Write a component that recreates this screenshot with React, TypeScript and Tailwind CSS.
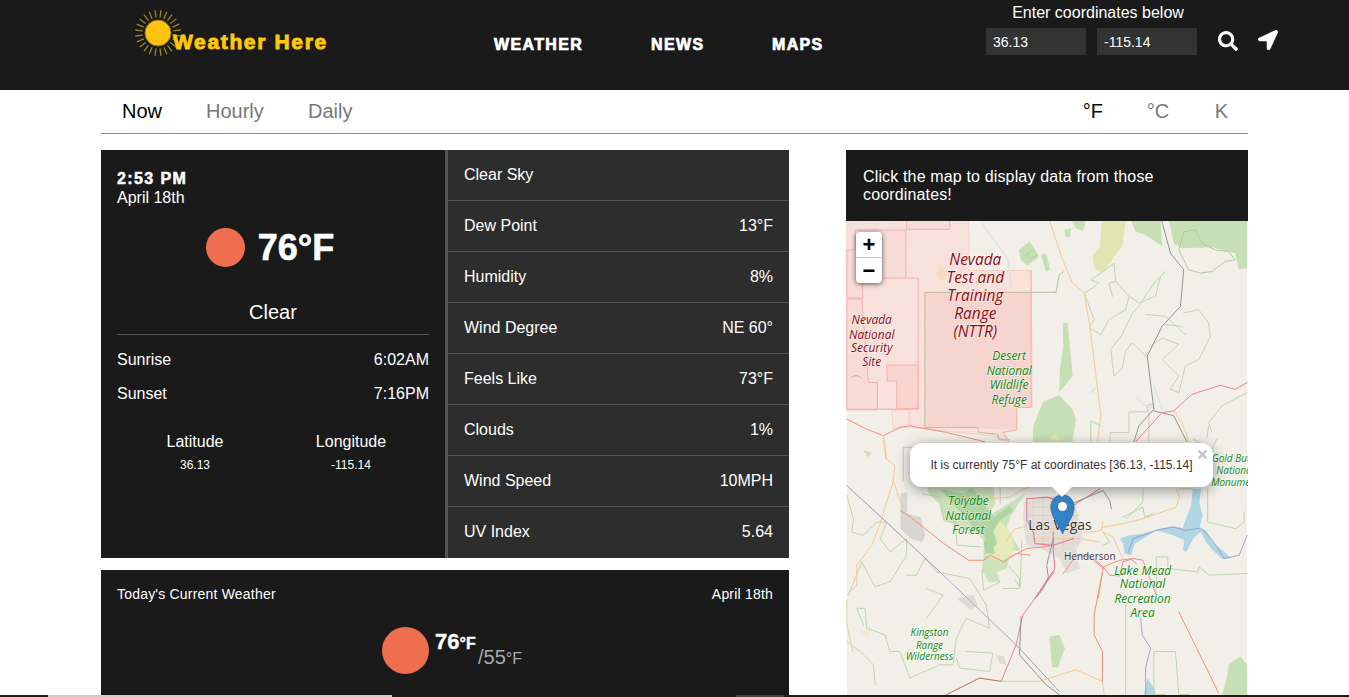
import React from "react";
import { FaSearch, FaLocationArrow, FaTimes } from "react-icons/fa";

const sans = "font-['Liberation_Sans',Arial,sans-serif]";
const heavy = "font-bold [-webkit-text-stroke:0.6px_currentColor]";

function SunLogo() {
  const rays = Array.from({ length: 24 }, (_, i) => (i * 15 + 7.5) * (Math.PI / 180));
  return (
    <svg width="48" height="48" viewBox="0 0 48 48" className="shrink-0">
      {rays.map((a, i) => (
        <line key={i} x1={24 + 15.5 * Math.cos(a)} y1={24 + 15.5 * Math.sin(a)} x2={24 + 23 * Math.cos(a)} y2={24 + 23 * Math.sin(a)} stroke="#9a8228" strokeWidth="1.3" />
      ))}
      <circle cx="24" cy="24" r="13" fill="#ffc20e" stroke="#8a7524" strokeWidth="1" />
    </svg>
  );
}

function SunIcon({ size }: { size: string }) {
  return <div className={`${size} rounded-full bg-[#ee6e4d] shrink-0`} />;
}

const rows: [string, string][] = [
  ["Clear Sky", ""],
  ["Dew Point", "13°F"],
  ["Humidity", "8%"],
  ["Wind Degree", "NE 60°"],
  ["Feels Like", "73°F"],
  ["Clouds", "1%"],
  ["Wind Speed", "10MPH"],
  ["UV Index", "5.64"],
];

const G = "#b9d7aa";
const O = "#f6c88f";
const R = "#f08f78";
const P = "#ea7f9c";
const D = "#8d9692";

function Z({ x, y, children }: { x: number; y: number; children: React.ReactNode }) {
  return <g transform={`translate(${x},${y}) scale(0.33333)`}>{children}</g>;
}
function L({ d, c, w = 3 }: { d: string; c: string; w?: number }) {
  return <path d={d} fill="none" stroke={c} strokeWidth={w} strokeLinejoin="round" strokeLinecap="round" />;
}
function Label({ x, ys, lines, size, color, italic = true }: { x: number; ys: number[]; lines: string[]; size: number; color: string; italic?: boolean }) {
  return (
    <>
      {lines.map((t, i) => (
        <text key={t} x={x} y={ys[i]} textAnchor="middle" fontSize={size} fill={color} fontStyle={italic ? "italic" : "normal"} fontFamily="'Open Sans',sans-serif" stroke="rgba(255,255,255,0.45)" strokeWidth="1.5" paintOrder="stroke">
          {t}
        </text>
      ))}
    </>
  );
}

function Range({ d, fill }: { d: string; fill: string }) {
  return (
    <>
      <path d={d} fill={fill} stroke="#f5b0ab" strokeWidth="3" />
      <path d={d} fill="url(#hatch)" />
    </>
  );
}

function MapArt() {
  return (
    <svg viewBox="0 0 402 476" className="absolute inset-0 w-full h-full block">
      <defs>
        <pattern id="hatch" width="5" height="5" patternUnits="userSpaceOnUse" patternTransform="rotate(-45)">
          <line x1="0" y1="0.5" x2="5" y2="0.5" stroke="#eeb0a8" strokeWidth="0.8" opacity="0.7" />
        </pattern>
      </defs>
      <rect width="402" height="476" fill="#f2efe9" />
      <g className="blur-[0.3px]">
        <Z x={0} y={-1}>
          {/* light restricted range */}
          <path d="M0 0H365L368 30V152H556L558 565H512V632L470 640L490 668L440 650L190 625L188 570L135 575L140 630L185 622L188 570H0Z" fill="#f9e5e0" stroke="#f7c3bb" strokeWidth="2" />
          <path d="M0 0H365L368 30V152H556L558 565H512V632L470 640L490 668L440 650L190 625L188 570H0Z" fill="url(#hatch)" />
          <Range d="M0 90H25V30H178V175H48V235H0Z" fill="#f8dfd9" />
          <Range d="M180 0H310V28H180Z" fill="#f8dfd9" />
          <Range d="M0 238H45L65 490H92V572H0Z" fill="#f8dfd9" />
          <Range d="M120 437H215V568H150V485H122Z" fill="#f7d8d2" />
          <L d="M178 175H215V570H0" c="#f5b0ab" />
          <path d="M235 218H555V565H512V632L398 628L235 625Z" fill="#f6d8d2" />
          <path d="M235 218H555V565H512V632L398 628L235 625Z" fill="url(#hatch)" />
          <path d="M235 218H630L640 165L655 155M235 218V625H395L398 640L455 645L458 662H490" fill="none" stroke="#bdbf9c" strokeWidth="3" />
          <L d="M555 152V565H512V632L470 640L490 668" c="#f5b0ab" />
          <ellipse cx="285" cy="162" rx="15" ry="19" fill="#f8dcbd" />

          {/* green parks */}
          <path d="M518 90L550 65L565 85L578 112L545 137L525 122Z" fill="#c7dfb5" />
          <L d="M540 105L560 90L575 105L555 118Z" c="#a9cf98" w={2} />
          <path d="M585 105L600 100L613 150L600 156Z" fill="#c7dfb5" />
          <path d="M655 30L675 25L672 50L660 52Z" fill="#c7dfb5" />
          <path d="M675 0H720L712 32L690 25Z" fill="#c7dfb5" />
          <path d="M855 0H945L950 78L900 45L870 35Z" fill="#c7dfb5" />
          <path d="M970 0H1206V145L1180 148L1170 100L1100 82L1010 85L985 70Z" fill="#c7dfb5" />
          <path d="M768 0H840L830 80L790 130L770 160L745 145L740 105L762 85Z" fill="#dfe6b2" />
          <path d="M650 312L665 308L672 380L680 470L640 520L642 450L652 380Z" fill="#c7dfb5" />
          <path d="M590 550L610 540L640 528L680 570L690 600L680 668H560L562 620Z" fill="#c7dfb5" />
          <path d="M610 660L630 640L645 668Z" fill="#dfe6b2" />

          {/* thin green boundaries */}
          <L d="M1015 35L1050 30L1070 70L1110 90L1150 95L1170 120L1140 125L1100 155L1065 160L1030 150L1000 90L1015 35" c="#a8cf9a" />
          <L d="M715 220L740 205L760 190L735 180L765 160L805 130L810 185L850 230L840 270L790 300L765 345L730 325L745 300L715 220" c={G} />
          <L d="M810 185L790 190L800 230M850 230L880 250L930 230L945 170L960 155L930 185L905 220L880 260L860 280L830 345L795 390L805 470L830 445L840 395L860 370L900 410L905 400" c={G} />
          <L d="M1015 280L1060 270L1090 310L1095 350L1060 420L1020 440L1000 520L975 510L1000 470L950 420L1000 375L950 355L915 380M900 285L960 290L1020 345M960 315L1010 320" c={G} />
          <L d="M1100 640L1090 610L1130 560L1206 520M1085 655L1090 620" c={G} />
          <L d="M735 668V605L765 620M735 520L750 505" c={G} />
          <L d="M793 668V640H850V578H905V558L925 555V575M910 668V575" c="#d8c8ba" />
          <L d="M872 535L900 560L925 565M925 500L950 570" c="#bcdde8" w={2} />
          <L d="M405 5L430 45L485 115L495 200" c="#bcdde8" w={2} />

          {/* roads */}
          <L d="M610 0L650 120L680 190L715 220L735 340L765 590L755 668" c={O} />
          <L d="M0 600L60 630L110 650L160 625L190 620L300 640L415 668" c={R} />
          <L d="M110 650L118 720" c={O} />
          <L d="M948 0L975 100L1015 150L1005 260L950 320L905 410L925 570L880 620L865 668" c={D} />
          <L d="M925 575L985 590L1010 640L1025 668" c={D} />
          <L d="M985 575L1010 610L1030 665" c={O} />
          <L d="M870 668L950 580L985 575L1040 525L1125 498L1170 510L1206 490" c={P} />
          <path d="M12 475Q28 462 45 476" fill="none" stroke="#999" strokeWidth="2" />
        </Z>

        <Z x={0} y={219}>
          <path d="M50 35L75 40L65 55Z" fill="#c7dfb5" />
          <path d="M330 480L380 470L395 500L375 515Z" fill="#dedbd5" />
          <path d="M450 650L475 655L480 680L460 675Z" fill="#dedbd5" />
          <path d="M610 595L640 590L657 630L635 690L618 685Z" fill="#c7dfb5" />
          <path d="M1150 680L1185 655L1206 680V770H1130L1145 720Z" fill="#c7dfb5" />
          <path d="M40 580L75 570L60 600Z" fill="#f6e7cd" />
          <path d="M895 770L905 720L925 750L932 770Z" fill="#b0d6e4" />

          <L d="M170 25H220V140H300M170 25V125" c={G} />
          <L d="M490 385L520 420V450H470" c={G} />
          <L d="M0 170L20 240L15 280L50 290L90 250L120 250L100 300L130 340L180 300V350L130 430L85 445L45 370L25 420L5 470M180 410L210 410L235 360L270 400L370 420L420 500L430 570L360 540L330 600L320 680L280 680L190 720L160 640L130 640L115 590L60 570L55 510L30 510L50 560M240 450L290 470L240 540" c={G} />
          <L d="M0 610L40 640L80 680L85 740M360 640L440 645L430 700L340 690L330 660" c={G} />
          <L d="M840 500V770M925 640V770H960M925 640H990L1000 770L1030 770" c={G} />
          <L d="M1045 0L1100 30L1115 0M1040 150H1000" c={G} />
          <L d="M0 140L130 260L280 400" c="#9e9ea0" />
          <L d="M280 400L510 620" c="#b6a7bf" />
          <L d="M510 620L640 760" c="#9e9ea0" />
          <L d="M885 540L890 590L915 630L900 690L900 770" c="#a7a4cd" />

          <L d="M110 0L120 60L145 80L140 125L175 230" c={O} />
          <L d="M140 125L100 255L75 320L30 380L30 440L0 470" c={O} />
          <L d="M0 485L0 560L18 640" c="#d7d59c" />
          <L d="M300 770L400 720L465 730L580 730L690 695L770 730L775 770" c={O} />
          <L d="M300 770L400 720L465 730" c="#b37d73" />
          <L d="M770 400L745 530L745 590L770 640V730M1000 520L1120 765" c={R} />
          <L d="M465 730L510 620L530 530L625 400" c={P} />
          <L d="M525 535L520 650L600 740L640 770" c={D} />
        </Z>

        {/* Toiyabe National Forest */}
        <Z x={54} y={264}>
          <path d="M80 10L280 10L285 60L260 100L340 50L375 30L330 100L320 130L360 200L330 205L320 255L290 265L300 295L265 295L245 260L250 215L250 170L230 150L130 110L115 60L85 30Z" fill="#cbe2bb" />
          <path d="M120 15L190 30L215 10L250 60L280 100L330 65L340 80L300 110L280 150L300 190L280 215L260 180L250 150L220 130L175 80Z" fill="#b0d5a3" />
          <path d="M300 110L340 160L340 205L300 235L255 215L290 180L280 140Z" fill="#e6e9b8" />
          <path d="M250 170L275 175L285 210L255 210Z" fill="#b0d5a3" />
          <path d="M0 30L20 25L20 90L60 100L75 155L65 175L30 165L0 135Z" fill="#d8d6d2" />
          <L d="M65 30L120 40L130 110L165 115L170 185L245 190M245 260L250 320L300 295M345 290L360 310L365 170M300 10V60" c={G} />
          <L d="M0 80L30 100L80 140L130 180L205 230L250 230L270 215L310 235L350 210L390 215" c={R} />
          <L d="M270 45L330 40L370 15L390 10M320 170L345 135L390 125" c={O} />
        </Z>

        {/* Las Vegas, Henderson and Lake Mead */}
        <Z x={164} y={269}>
          <path d="M330 150L360 140L400 135L450 120L490 112L520 118L530 90L545 50L550 0H575L570 40L580 80L570 118L590 125L615 165L640 185L665 208L640 212L610 185L590 160L575 130L555 145L530 190L520 185L525 155L490 140L440 125L400 150L375 165L365 200L345 195L340 165Z" fill="#b0d6e4" />
          <L d="M355 195L370 150L440 125L490 115L530 125L575 118L610 155L645 210L690 200L714 140" c="#9e97c2" w={2.5} />
          <L d="M595 0V100L680 120L705 100V70M400 0V40L350 90M440 320V205H475V240L565 250L570 235L600 260L714 255M340 85L400 55L405 85L430 75M280 130L300 160L280 170" c={G} />
          <L d="M280 115L340 105L400 90L500 55L510 25L500 0M280 130L310 145L330 190L340 210M200 130L240 130L275 125L280 100M200 150L270 160" c={O} />
          <path d="M40 40L130 20L200 60L220 150L200 180L210 240L170 255L150 210L90 180L50 170L40 100Z" fill="#dcd9d5" opacity="0.8" />
          <L d="M60 55H200M60 80H210M60 120H220M70 150H210M75 165H190M70 30V160M100 25V180M130 25V170M160 40V190M190 50V170" c="#f5c68a" w={2} />
          <L d="M0 205L50 180L100 175L130 170M160 255L200 200L240 200L280 235L330 215L370 210L400 215L440 320M280 240L265 330" c={R} />
          <L d="M200 200L240 205L280 240" c={P} />
          <L d="M280 235L300 260L330 262L340 220L365 212L380 225" c={P} />
          <L d="M50 30L110 25L165 40L190 50L270 0M50 30V95L70 130L75 165L130 170M130 130V190L135 240L75 330M130 170L190 150" c={P} w={3.5} />
          <L d="M130 150L110 230L115 265L100 300L80 325M185 45L280 5L300 35L305 60" c={D} />
        </Z>
      </g>
      <Label x={129} ys={[44, 62, 80, 98, 116]} lines={["Nevada", "Test and", "Training", "Range", "(NTTR)"]} size={15.5} color="#8b0a14" />
      <Label x={25} ys={[103, 118, 132, 146]} lines={["Nevada", "National", "Security", "Site"]} size={12} color="#8b0a14" />
      <Label x={163} ys={[140, 155, 169, 184]} lines={["Desert", "National", "Wildlife", "Refuge"]} size={12} color="#0f8a14" />
      <Label x={122} ys={[285, 300, 314]} lines={["Toiyabe", "National", "Forest"]} size={12} color="#0f8a14" />
      <Label x={297} ys={[355, 369, 384, 398]} lines={["Lake Mead", "National", "Recreation", "Area"]} size={12} color="#0f8a14" />
      <Label x={83} ys={[417, 430, 441]} lines={["Kingston", "Range", "Wilderness"]} size={10} color="#0f8a14" />
      <Label x={214} ys={[310]} lines={["Las Vegas"]} size={14} color="#333" italic={false} />
      <Label x={244} ys={[340]} lines={["Henderson"]} size={10} color="#333" italic={false} />
      <Label x={390} ys={[242, 254, 266]} lines={["Gold Butte", "National", "Monument"]} size={10} color="#0f8a14" />
    </svg>
  );
}

function Marker() {
  return (
    <svg width="25" height="41" viewBox="0 0 25 41" className="absolute left-[203.5px] top-[273px]">
      <defs>
        <linearGradient id="pin" x1="0" y1="0" x2="0" y2="1">
          <stop offset="0" stopColor="#3a85c0" />
          <stop offset="1" stopColor="#2a7fcb" />
        </linearGradient>
      </defs>
      <path d="M12.5 40C10 33 0.7 23 0.7 13C0.7 6 6 0.7 12.5 0.7C19 0.7 24.3 6 24.3 13C24.3 23 15 33 12.5 40Z" fill="url(#pin)" stroke="#2e6c97" strokeWidth="0.6" />
      <circle cx="12.5" cy="12.5" r="4.5" fill="#fff" />
    </svg>
  );
}

export default function App() {
  return (
    <div className={`${sans} h-[697px] w-[1349px] flex flex-col overflow-hidden bg-white text-white`}>
      <div className="flex-1 min-h-0 overflow-hidden flex flex-col">
        <header className="h-[90px] shrink-0 bg-[#1a1a1a] flex items-start">
          <div className="w-[494px] shrink-0 flex pl-[134px] pt-[9px] h-full">
            <SunLogo />
            <span className="font-bold [-webkit-text-stroke:0.9px_currentColor] text-[21px] leading-[24px] tracking-[1.65px] text-[#ffc80a] ml-[-9px] mt-[21px] whitespace-nowrap">Weather Here</span>
          </div>
          <nav className="font-bold [-webkit-text-stroke:0.7px_currentColor] flex text-[16px] leading-[20px] pt-[35px] tracking-[1.35px]">
            <span className="w-[157px]">WEATHER</span>
            <span className="w-[121px]">NEWS</span>
            <span>MAPS</span>
          </nav>
          <div className="ml-auto w-[363px] shrink-0 flex">
            <div className="w-[211px] flex flex-col items-center pt-[4px]">
              <div className="text-[16px] leading-[18px] pl-[13px] whitespace-nowrap">Enter coordinates below</div>
              <div className="flex gap-[11px] mt-[6px]">
                <input defaultValue="36.13" className="w-[100px] h-[27px] bg-[#333] px-[7px] text-[14px] text-white outline-none" />
                <input defaultValue="-115.14" className="w-[100px] h-[27px] bg-[#333] px-[7px] text-[14px] text-white outline-none" />
              </div>
            </div>
            <div className="flex gap-[20px] pt-[30px] pl-[21px]">
              <FaSearch className="w-[20px] h-[20px] mt-[1px]" />
              <FaLocationArrow className="w-[20px] h-[20px]" />
            </div>
          </div>
        </header>

        <div className="mx-[101px] w-[1147px] flex-1 min-h-0 flex flex-col">
          <div className="h-[44px] shrink-0 border-b border-[#888] flex text-[20px] leading-[42px] text-[#777]">
            <span className="ml-[21px] w-[84px] text-black">Now</span>
            <span className="w-[102px]">Hourly</span>
            <span>Daily</span>
            <div className="ml-auto flex mr-[20px]">
              <span className="w-[64px] text-black">°F</span>
              <span className="w-[68px]">°C</span>
              <span>K</span>
            </div>
          </div>

          <div className="flex justify-between mt-[16px] flex-1 min-h-0">
            <div className="w-[688px] shrink-0 flex flex-col">
              <section className="h-[408px] shrink-0 flex bg-[#1a1a1a]">
                <div className="w-[344px] shrink-0 px-[16px] pt-[20px]">
                  <div className="font-bold [-webkit-text-stroke:0.5px_currentColor] text-[16px] leading-[18px] tracking-[1.4px]">2:53 PM</div>
                  <div className="text-[16px] leading-[20px]">April 18th</div>
                  <div className="flex items-center justify-center gap-[13px] mt-[20px] pr-[6px] h-[39px]">
                    <SunIcon size="w-[39px] h-[39px]" />
                    <span className={`${heavy} text-[36px] leading-[40px]`}>76°F</span>
                  </div>
                  <div className="text-center text-[20px] leading-[24px] mt-[33px]">Clear</div>
                  <div className="h-px bg-[#555] mt-[10px]" />
                  <div className="flex justify-between text-[16px] leading-[20px] mt-[15px]"><span>Sunrise</span><span>6:02AM</span></div>
                  <div className="flex justify-between text-[16px] leading-[20px] mt-[14px]"><span>Sunset</span><span>7:16PM</span></div>
                  <div className="flex mt-[28px] text-center">
                    <div className="w-[156px]">
                      <div className="text-[16px] leading-[20px]">Latitude</div>
                      <div className="text-[12px] leading-[14px] mt-[6px]">36.13</div>
                    </div>
                    <div className="w-[156px]">
                      <div className="text-[16px] leading-[20px]">Longitude</div>
                      <div className="text-[12px] leading-[14px] mt-[6px]">-115.14</div>
                    </div>
                  </div>
                </div>
                <div className="flex-1 bg-[#2d2d2d] border-l-[3px] border-[#555]">
                  {rows.map(([a, b], i) => (
                    <div key={a} className={`h-[51px] flex justify-between items-center px-[16px] text-[16px] border-b ${i < 7 ? "border-[#555]" : "border-transparent"}`}>
                      <span>{a}</span>
                      <span>{b}</span>
                    </div>
                  ))}
                </div>
              </section>

              <section className="mt-[12px] flex-1 bg-[#1a1a1a] px-[16px] pt-[16px]">
                <div className="flex justify-between text-[14px] leading-[16px] tracking-[0.2px]">
                  <span>Today's Current Weather</span>
                  <span>April 18th</span>
                </div>
                <div className="flex ml-[265px] mt-[25px]">
                  <SunIcon size="w-[47px] h-[47px]" />
                  <div className="font-bold [-webkit-text-stroke:0.4px_currentColor] ml-[6px] w-[43px] text-[22px] leading-[26px] mt-[2px]">76<span className="text-[16px]">°F</span></div>
                  <div className="text-[#aaa] text-[20px] leading-[24px] mt-[18px]">/55<span className="text-[16px]">°F</span></div>
                </div>
              </section>
            </div>

            <div className="w-[402px] shrink-0 flex flex-col">
              <div className="h-[71px] shrink-0 bg-[#1a1a1a] px-[17px] pt-[18px] text-[16px] leading-[18px] tracking-[0.15px]">
                Click the map to display data from those coordinates!
              </div>
              <div className="flex-1 relative overflow-hidden">
                <MapArt />
                <Marker />
                <div className="absolute left-[64px] top-[222px] w-[303px] h-[44px] bg-white rounded-[12px] shadow-[0_3px_14px_rgba(0,0,0,0.4)] text-[#333] text-[12px] leading-[44px] text-center whitespace-nowrap">
                  It is currently 75°F at coordinates [36.13, -115.14]
                  <FaTimes className="absolute right-[5px] top-[5px] w-[11px] h-[13px] text-[#c3c3c3]" />
                </div>
                <div className="absolute left-[206px] top-[266px] w-0 h-0 border-x-[10px] border-x-transparent border-t-[10px] border-t-white" />
                <div className="absolute left-[10px] top-[11px] w-[26px] rounded-[4px] bg-white shadow-[0_1px_5px_rgba(0,0,0,0.65)] text-black font-bold text-[22px] text-center leading-[26px]">
                  <div className="h-[26px] border-b border-[#ccc]">+</div>
                  <div className="h-[25px]">−</div>
                </div>
              </div>
            </div>
          </div>
        </div>
      </div>
      <div className="h-[2px] shrink-0 bg-[#1a1a1a] flex">
        <div className="w-[48px]" />
        <div className="w-[344px] bg-[#ccc]" />
        <div className="w-[344px]" />
        <div className="w-[48px] bg-[#444]" />
      </div>
    </div>
  );
}
